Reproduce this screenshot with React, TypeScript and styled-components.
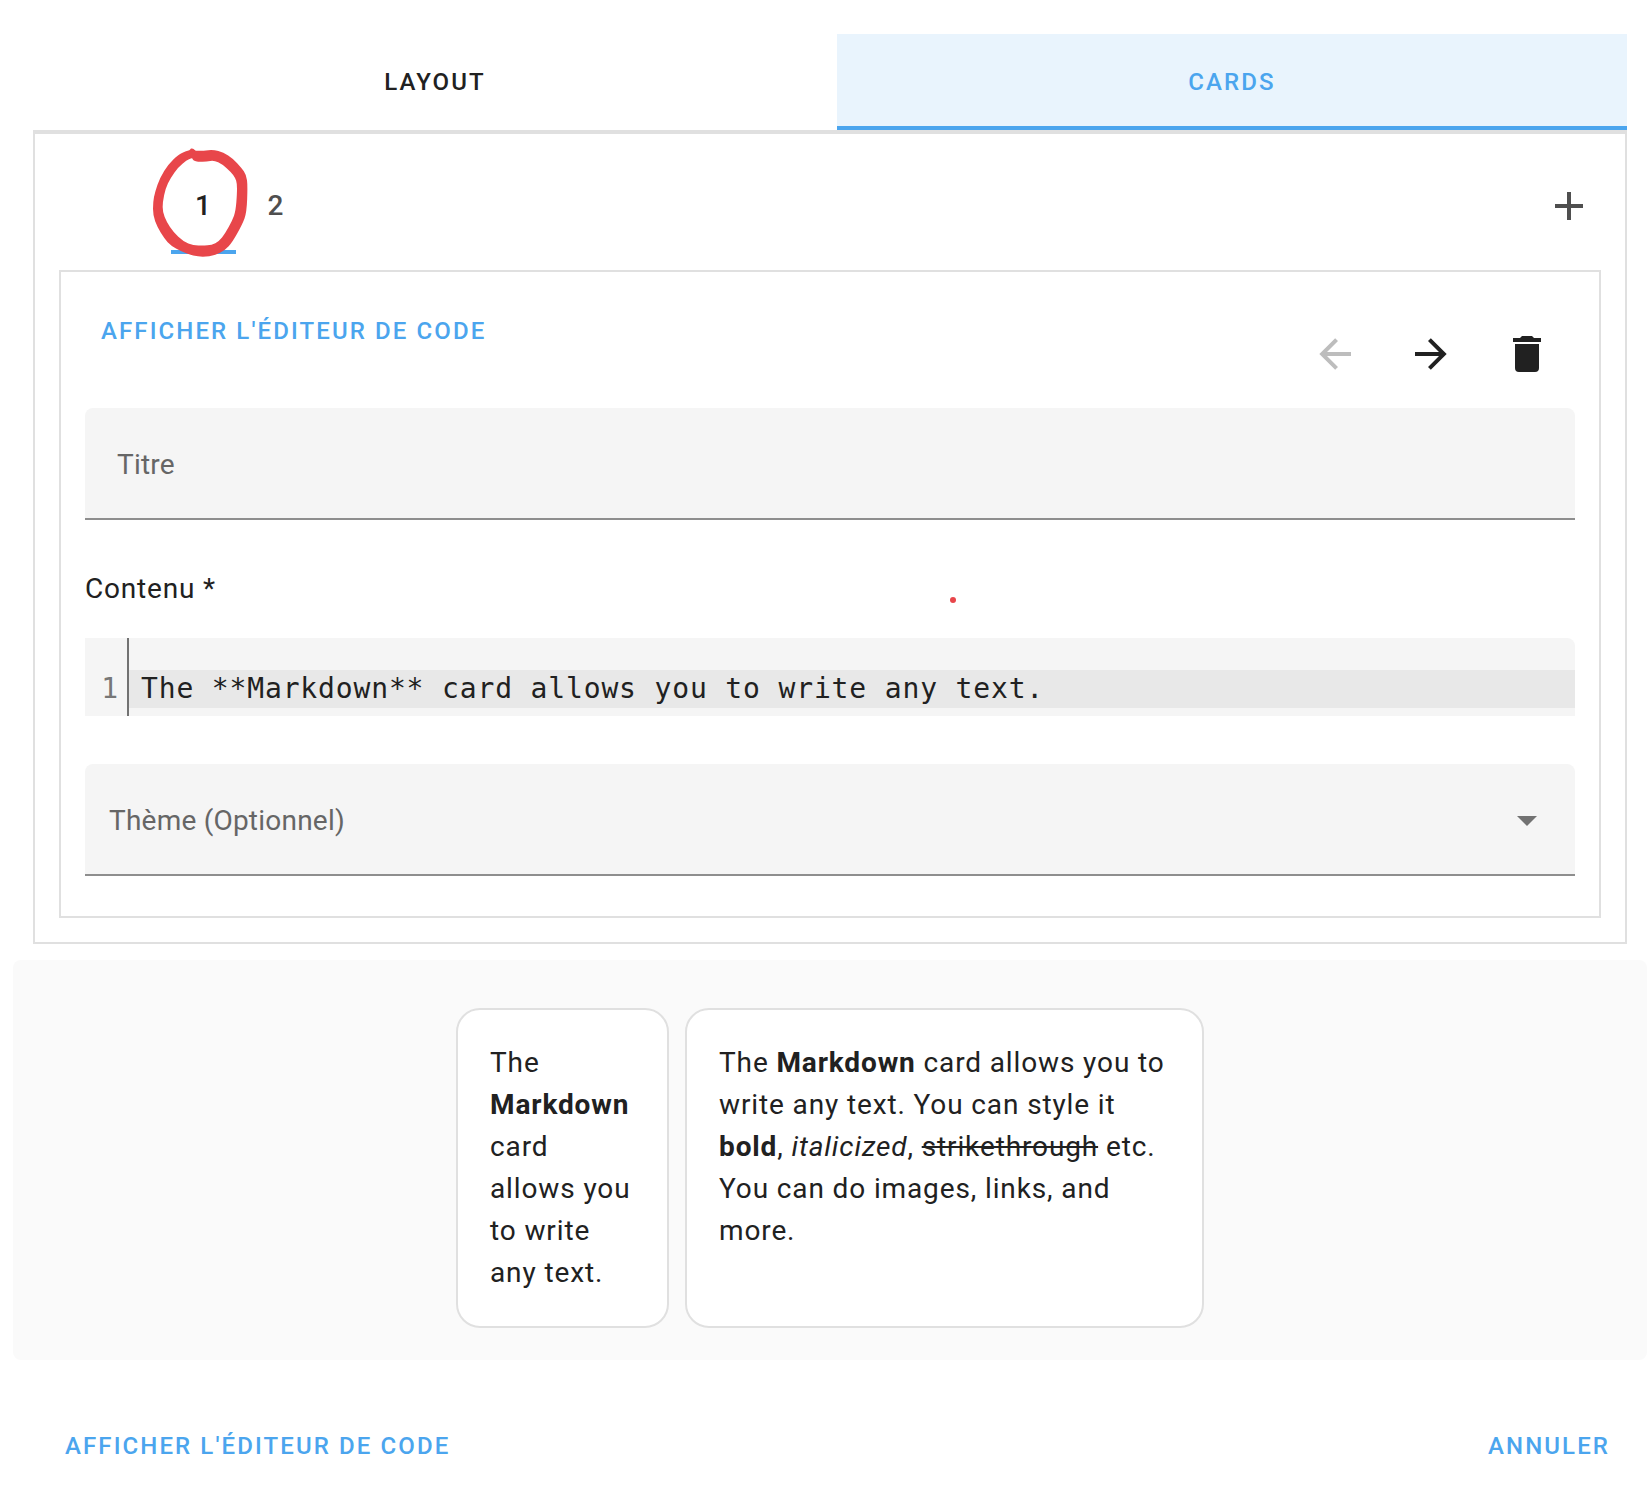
import React from "react";
import styled, { createGlobalStyle } from "styled-components";

const BLUE = "#4ba5ee";
const INK = "#212121";
const LINE = "#e0e0e0";
const FIELD = "#f5f5f5";
const RED = "#e8464a";

const GlobalStyle = createGlobalStyle`
  *, *::before, *::after { box-sizing: border-box; }
  body {
    margin: 0;
    background: #fff;
    color: ${INK};
    font-family: Roboto, "Noto Sans", sans-serif;
    font-size: 28px;
    line-height: 42px;
    letter-spacing: 0.875px;
    -webkit-font-smoothing: antialiased;
  }
  button { font: inherit; letter-spacing: inherit; border: 0; background: none; padding: 0; margin: 0; }
`;

const Dialog = styled.div`
  width: 1648px;
  height: 1502px;
  overflow: hidden;
  display: flex;
  flex-direction: column;
  padding-top: 34px;
`;

const Editor = styled.section`
  margin: 0 21px 0 33px;
`;

const MainTabs = styled.div`
  display: grid;
  grid-template-columns: 804px 790px;
  height: 98px;
  border-bottom: 2px solid ${LINE};
`;

const MainTab = styled.button<{ $active?: boolean }>`
  && {
    font-size: 24px;
    font-weight: 500;
    letter-spacing: 2.1px;
    padding-top: ${(p) => (p.$active ? 4 : 0)}px;
    color: ${(p) => (p.$active ? BLUE : INK)};
    background: ${(p) => (p.$active ? "#e9f4fd" : "transparent")};
    border-bottom: ${(p) => (p.$active ? `4px solid ${BLUE}` : "0")};
  }
`;

const CardsPane = styled.div`
  height: 812px;
  border: 2px solid ${LINE};
  padding: 24px;
  display: flex;
  flex-direction: column;
`;

const CardTabs = styled.div`
  position: relative;
  display: flex;
  height: 96px;
  margin-bottom: 16px;
  padding: 0 8px 0 112px;
`;

const CardTab = styled.button<{ $active?: boolean }>`
  && {
    width: ${(p) => (p.$active ? 65 : 80)}px;
    font-weight: 500;
    color: ${(p) => (p.$active ? INK : "#4f4f4f")};
    padding-top: ${(p) => (p.$active ? 4 : 0)}px;
    border-bottom: ${(p) => (p.$active ? `4px solid ${BLUE}` : "0")};
  }
`;

const AddButton = styled.button`
  && { margin-left: auto; }
  display: flex;
  align-items: center;
`;

const CircleMark = styled.svg`
  position: absolute;
  left: 86px;
  top: -16px;
  pointer-events: none;
`;

const CardPanel = styled.div`
  height: 648px;
  border: 2px solid ${LINE};
  padding: 0 24px;
`;

const Toolbar = styled.div`
  display: flex;
  justify-content: space-between;
  height: 136px;
`;

const TextButton = styled.button`
  && {
    height: 72px;
    padding: 0 16px;
    color: ${BLUE};
    font-size: 24px;
    font-weight: 500;
    letter-spacing: 2.1px;
    white-space: nowrap;
  }
`;

const ToolbarAction = styled.div`
  padding-top: 23px;
`;

const IconGroup = styled.div`
  display: flex;
  padding-top: 34px;
`;

const IconButton = styled.button`
  display: grid;
  place-items: center;
  width: 96px;
  height: 96px;
`;

const Field = styled.div<{ $inset: number }>`
  display: flex;
  align-items: center;
  justify-content: space-between;
  height: 112px;
  padding: 4px 38px 0 ${(p) => p.$inset}px;
  background: ${FIELD};
  border-bottom: 2px solid #8e8e8e;
  border-radius: 8px 8px 0 0;
  color: #666;
  letter-spacing: 0.22px;
`;

const Caret = styled.span`
  border: 10px solid transparent;
  border-top-color: #727272;
  border-bottom: 0;
`;

const LabelRow = styled.div`
  position: relative;
  height: 118px;
  padding-top: 48px;
  letter-spacing: 0.8px;
`;

const RedDot = styled.span`
  position: absolute;
  left: 864.5px;
  top: 77px;
  width: 6px;
  height: 6px;
  border-radius: 50%;
  background: ${RED};
`;

const CodeEditor = styled.div`
  display: flex;
  height: 78px;
  margin-bottom: 48px;
  background: ${FIELD};
  border-radius: 0 8px 0 0;
  font-family: "DejaVu Sans Mono", monospace;
  line-height: 38px;
  letter-spacing: 0.85px;
`;

const Gutter = styled.div`
  width: 44px;
  padding: 32px 8px 0 0;
  border-right: 2px solid #727272;
  color: #777;
  text-align: right;
`;

const CodeLines = styled.div`
  flex: 1;
  padding-top: 32px;
`;

const ActiveLine = styled.div`
  height: 38px;
  padding-left: 12px;
  background: #e8e8e8;
  white-space: pre;
`;

const Preview = styled.section`
  display: flex;
  justify-content: center;
  gap: 16px;
  height: 400px;
  margin: 16px 1px 0 13px;
  padding: 48px 0 32px;
  background: #fafafa;
  border-radius: 8px;
`;

const MarkdownCard = styled.article<{ $width: number }>`
  width: ${(p) => p.$width}px;
  padding: 32px;
  background: #fff;
  border: 2px solid ${LINE};
  border-radius: 24px;
`;

const Footer = styled.footer`
  display: flex;
  justify-content: space-between;
  padding: 50px 22px 0 49px;
`;

const ICONS = {
  plus: "M19,13H13V19H11V13H5V11H11V5H13V11H19V13Z",
  left: "M20,11V13H8L13.5,18.5L12.08,19.92L4.16,12L12.08,4.08L13.5,5.5L8,11H20Z",
  right: "M4,11V13H16L10.5,18.5L11.92,19.92L19.84,12L11.92,4.08L10.5,5.5L16,11H4Z",
  trash:
    "M19,4H15.5L14.5,3H9.5L8.5,4H5V6H19M6,19A2,2 0 0,0 8,21H16A2,2 0 0,0 18,19V7H6V19Z",
};

function Icon({ name, color = INK }: { name: keyof typeof ICONS; color?: string }) {
  return (
    <svg width="48" height="48" viewBox="0 0 24 24" fill={color} aria-hidden="true">
      <path d={ICONS[name]} />
    </svg>
  );
}

type Point = [number, number];

const OUTER: Point[] = [
  [141, 19], [147, 21], [151, 27], [175, 26], [205, 23], [235, 31], [264, 50], [289, 77],
  [304, 99], [308, 130], [305, 212], [292, 247], [262, 301], [240, 325], [210, 340], [175, 345],
  [143, 341], [108, 328], [78, 311], [58, 290], [37, 255], [24, 220], [24, 180], [30, 150],
  [45, 107], [70, 67], [100, 38], [122, 28], [134, 25], [137, 20],
];

const INNER: Point[] = [
  [142, 49], [145, 56], [160, 60], [185, 59], [207, 55], [232, 67], [258, 90], [271, 108],
  [276, 125], [276, 155], [272, 207], [262, 235], [240, 275], [222, 298], [200, 309], [175, 311],
  [145, 310], [115, 299], [85, 270], [65, 240], [53, 210], [53, 180], [62, 138], [76, 109],
  [100, 75], [125, 55], [139, 49],
];

/** Closed curve through the midpoints of the given outline. */
function smooth(points: Point[]) {
  const mid = (a: Point, b: Point) => `${(a[0] + b[0]) / 2} ${(a[1] + b[1]) / 2}`;
  const last = points[points.length - 1];
  const curves = points.map((p, i) => `Q${p[0]} ${p[1]} ${mid(p, points[(i + 1) % points.length])}`);
  return `M${mid(last, points[0])}${curves.join("")}Z`;
}

export default function App() {
  return (
    <>
      <GlobalStyle />
      <Dialog>
        <Editor>
          <MainTabs>
            <MainTab>LAYOUT</MainTab>
            <MainTab $active>CARDS</MainTab>
          </MainTabs>
          <CardsPane>
            <CardTabs>
              <CardTab $active>1</CardTab>
              <CardTab>2</CardTab>
              <AddButton aria-label="+">
                <Icon name="plus" color="#4f4f4f" />
              </AddButton>
              <CircleMark width="150" height="120" viewBox="0 0 450 360">
                <path d={smooth(OUTER) + smooth(INNER)} fill={RED} fillRule="evenodd" />
              </CircleMark>
            </CardTabs>
            <CardPanel>
              <Toolbar>
                <ToolbarAction>
                  <TextButton>AFFICHER L'ÉDITEUR DE CODE</TextButton>
                </ToolbarAction>
                <IconGroup>
                  <IconButton>
                    <Icon name="left" color="#bdbdbd" />
                  </IconButton>
                  <IconButton>
                    <Icon name="right" />
                  </IconButton>
                  <IconButton>
                    <Icon name="trash" />
                  </IconButton>
                </IconGroup>
              </Toolbar>
              <Field $inset={32}>Titre</Field>
              <LabelRow>
                Contenu *
                <RedDot />
              </LabelRow>
              <CodeEditor>
                <Gutter>1</Gutter>
                <CodeLines>
                  <ActiveLine>The **Markdown** card allows you to write any text.</ActiveLine>
                </CodeLines>
              </CodeEditor>
              <Field $inset={24}>
                Thème (Optionnel)
                <Caret />
              </Field>
            </CardPanel>
          </CardsPane>
        </Editor>
        <Preview>
          <MarkdownCard $width={213}>
            The <b>Markdown</b> card allows you to write any text.
          </MarkdownCard>
          <MarkdownCard $width={519}>
            The <b>Markdown</b> card allows you to write any text. You can style it <b>bold</b>,{" "}
            <em>italicized</em>, <del>strikethrough</del> etc. You can do images, links, and more.
          </MarkdownCard>
        </Preview>
        <Footer>
          <TextButton>AFFICHER L'ÉDITEUR DE CODE</TextButton>
          <TextButton>ANNULER</TextButton>
        </Footer>
      </Dialog>
    </>
  );
}
